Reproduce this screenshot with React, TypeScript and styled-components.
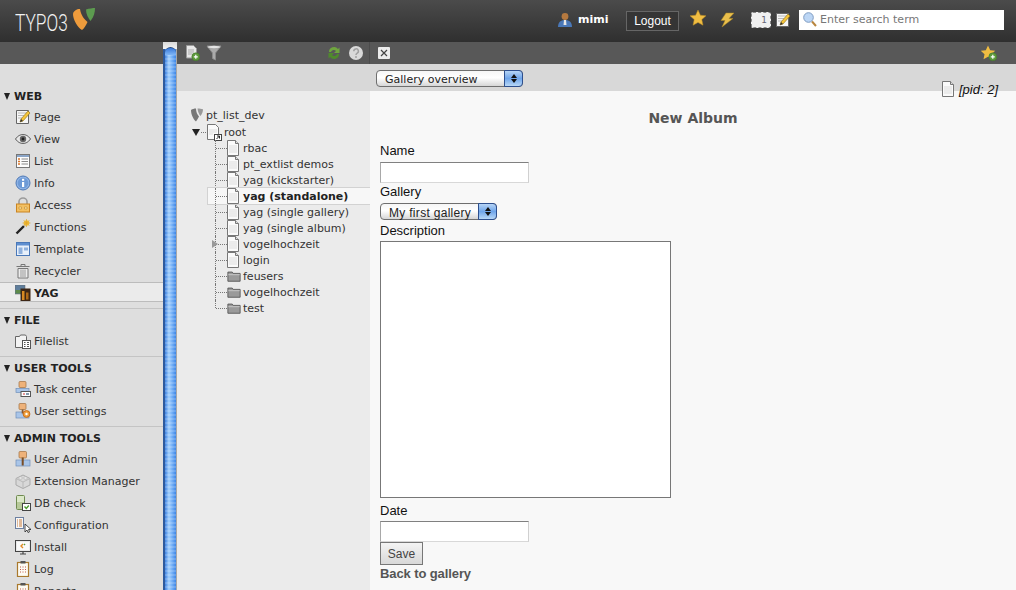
import React from 'react';
import styled, { createGlobalStyle } from 'styled-components';

const GlobalStyle = createGlobalStyle`
  html, body, #root { margin: 0; padding: 0; height: 100%; overflow: hidden; }
  body { font-family: "DejaVu Sans", Verdana, sans-serif; font-size: 11px; color: #333; }
`;

const Svg: React.FC<{ size?: number; children: React.ReactNode }> = ({ size = 16, children }) => (
  <svg width={size} height={size} viewBox="0 0 16 16" style={{ display: 'block', flex: 'none' }}>
    {children}
  </svg>
);

const DocIcon = () => (
  <svg width="12" height="16" viewBox="2 0 12 16" style={{ display: 'block', flex: 'none' }}>
    <path d="M2.5.5h8l3 3v12h-11z" fill="#fafafa" stroke="#777" />
    <path d="M10.5.5v3h3" fill="#ddd" stroke="#777" />
    <path d="M4 6h8M4 8h8M4 10h8M4 12h8" stroke="#ddd" />
  </svg>
);

const FolderIcon = () => (
  <svg width="14" height="14" viewBox="0 1 16 14" style={{ display: 'block', flex: 'none' }}>
    <path d="M1 3.5h5l1 1.500h8v9H1z" fill="#9a9a9a" stroke="#555" />
    <path d="M1.500 6.500h13" stroke="#ccc" />
  </svg>
);

const GreenPlus = () => (
  <>
    <circle cx="11.8" cy="11.8" r="4" fill="#5d9a3c" stroke="#3f6f28" strokeWidth=".5" />
    <path d="M9.800 11.800h4M11.800 9.800v4" stroke="#fff" strokeWidth="1.200" />
  </>
);

const icons: Record<string, React.ReactNode> = {
  page: (
    <Svg>
      <path d="M1.500 1.500h12v13h-12z" fill="#f6f6f6" stroke="#666" />
      <path d="M3 4h9M3 6.500h6M3 9h4" stroke="#b9b9b9" />
      <path d="M5 13l1-3 7-8 2 2-7 8z" fill="#f5c53a" stroke="#8a6a10" strokeWidth=".6" />
      <path d="M5 13l1-3 2 2z" fill="#333" />
    </Svg>
  ),
  view: (
    <Svg>
      <path d="M.5 8C3 4.500 5.500 3.600 8 3.600S13 4.500 15.500 8C13 11.500 10.500 12.400 8 12.400S3 11.500.5 8z" fill="#e8e8e8" stroke="#555" />
      <circle cx="8" cy="8" r="3.200" fill="#666" />
      <circle cx="8" cy="8" r="1.400" fill="#222" />
    </Svg>
  ),
  list: (
    <Svg>
      <rect x="1.500" y="1.500" width="13" height="13" fill="#fdfdfd" stroke="#777" />
      <path d="M2 2h12v2H2z" fill="#8aa5c8" />
      <path d="M3 6h2M3 8.500h2M3 11h2" stroke="#d9762a" strokeWidth="1.300" />
      <path d="M6.500 6H13M6.500 8.500H13M6.500 11H13" stroke="#8a8a8a" strokeWidth="1.200" />
    </Svg>
  ),
  info: (
    <Svg>
      <circle cx="8" cy="8" r="7" fill="#8fb4e6" stroke="#4f79b5" />
      <circle cx="8" cy="8" r="5.300" fill="#6d9ad6" />
      <rect x="7" y="7" width="2.200" height="5" fill="#fff" />
      <rect x="7" y="3.800" width="2.200" height="2" fill="#fff" />
    </Svg>
  ),
  access: (
    <Svg>
      <path d="M4 7V4.500a4 3.500 0 0 1 8 0V7" fill="none" stroke="#9b9b9b" strokeWidth="1.600" />
      <rect x="1.500" y="7" width="13" height="8" fill="#f3c063" stroke="#c98423" />
      <path d="M4 10h2.500v2H4zM9.500 10H12v2H9.500z" fill="#fbe7ad" stroke="#b77b1e" strokeWidth=".5" />
    </Svg>
  ),
  functions: (
    <Svg>
      <path d="M1.500 14.500L9 7" stroke="#222" strokeWidth="2.400" />
      <path d="M9 7l1.500-1.500" stroke="#bbb" strokeWidth="2.400" />
      <circle cx="11.500" cy="4" r="2.800" fill="#f0c23c" />
      <path d="M11.500 0v8M7.500 4h8M8.700 1.200l5.600 5.600M14.300 1.200L8.700 6.800" stroke="#e2a52a" strokeWidth=".7" />
    </Svg>
  ),
  template: (
    <Svg>
      <rect x="1.500" y="1.500" width="13" height="13" fill="#e8f0fa" stroke="#4a78b8" />
      <path d="M2 2h12v2.500H2z" fill="#5f8fd0" />
      <rect x="3.500" y="6.500" width="4" height="6.500" fill="#8fb1de" />
      <rect x="9" y="6.500" width="4" height="3" fill="#8fb1de" />
    </Svg>
  ),
  recycler: (
    <Svg>
      <path d="M1.500 3.500h13M6 3V1.500h4V3" fill="none" stroke="#777" />
      <path d="M3 5.500h10v9.500H3z" fill="#ececec" stroke="#777" />
      <path d="M6 6.500V14M8 6.500V14M10 6.500V14" stroke="#999" />
    </Svg>
  ),
  yag: (
    <Svg>
      <rect x="0" y="0" width="10" height="9" fill="#5f7e9c" stroke="#666" strokeWidth=".5" />
      <rect x="0.500" y="5" width="8" height="3.500" fill="#5d8a4a" />
      <rect x="5.500" y="3.500" width="10" height="12.500" fill="#3d2615" />
      <rect x="7" y="6" width="2.500" height="9" fill="#d88a22" />
      <rect x="11" y="7.500" width="2.500" height="7" fill="#b06a18" />
    </Svg>
  ),
  filelist: (
    <Svg>
      <path d="M.5 3.500h4l1-1.500h5l1 1.500v11H.5z" fill="#f3f3f3" stroke="#666" />
      <rect x="7.500" y="7.500" width="8" height="8" fill="#fff" stroke="#555" />
      <path d="M9 9.500h1.500M12 9.500h2M9 11.500h1.500M12 11.500h2M9 13.500h1.500M12 13.500h2" stroke="#555" />
    </Svg>
  ),
  task: (
    <Svg>
      <rect x="4" y="0.500" width="7" height="6" rx="1" fill="#eeb27a" stroke="#a0703f" strokeWidth=".7" />
      <rect x="1" y="7.500" width="13" height="4" fill="#a9c5e8" stroke="#6f8fb9" strokeWidth=".7" />
      <rect x="6" y="10.500" width="9.500" height="5" fill="#fff" stroke="#555" />
      <path d="M8 13h2" stroke="#c33" strokeWidth="1.200" />
      <path d="M11 13h3" stroke="#357" strokeWidth="1.200" />
    </Svg>
  ),
  settings: (
    <Svg>
      <rect x="4" y="0.500" width="7" height="6" rx="1" fill="#eeb27a" stroke="#a0703f" strokeWidth=".7" />
      <rect x="1" y="9" width="13" height="6" fill="#a9c5e8" stroke="#6f8fb9" strokeWidth=".7" />
      <rect x="6.700" y="6.500" width="1.800" height="4" fill="#8a5a2e" />
      <circle cx="11.500" cy="11" r="3.400" fill="#f0a03c" stroke="#c96d1a" />
      <circle cx="11.500" cy="11" r="1.200" fill="#fff" />
    </Svg>
  ),
  useradmin: (
    <Svg>
      <rect x="4" y="0.500" width="7.500" height="6.500" rx="1" fill="#eeb27a" stroke="#a0703f" strokeWidth=".7" />
      <rect x="1" y="9" width="14" height="6" fill="#a9c5e8" stroke="#6f8fb9" strokeWidth=".7" />
      <rect x="6.700" y="6.500" width="2" height="8" fill="#7a4e26" />
    </Svg>
  ),
  extension: (
    <Svg>
      <path d="M8 2l7 3.500v6.500L8 15.500 1 12V5.500z" fill="#d8d8d8" stroke="#a9a9a9" />
      <path d="M1 5.500l7 3.500 7-3.500M8 9v6.500" fill="none" stroke="#b8b8b8" />
      <ellipse cx="5.500" cy="5" rx="2" ry="1.200" fill="#f1f1f1" stroke="#aaa" strokeWidth=".6" />
      <ellipse cx="10.500" cy="5" rx="2" ry="1.200" fill="#f1f1f1" stroke="#aaa" strokeWidth=".6" />
    </Svg>
  ),
  db: (
    <Svg>
      <path d="M1.500 1.500q0-1 1-1h6q1 0 1 1v12q0 1-1 1h-6q-1 0-1-1z" fill="#dbe8c8" stroke="#6f8a50" />
      <path d="M2 7h7v7H2z" fill="#b7c99a" />
      <rect x="7.500" y="8.500" width="8" height="7" fill="#fff" stroke="#444" />
      <path d="M9.500 11.500l1.800 2 2.500-3" fill="none" stroke="#4a9a2c" strokeWidth="1.400" />
    </Svg>
  ),
  config: (
    <Svg>
      <rect x=".5" y=".5" width="8" height="11" fill="#f8f8f8" stroke="#6c7fa0" />
      <path d="M2 3h1M4 3h3M2 5h1M4 5h3M2 7h1M4 7h3M2 9h1M4 9h3" stroke="#c77a3a" />
      <path d="M10 7l0 8 2-2 1 2.500 1.500-.7-1-2.300h2.500z" fill="#fff" stroke="#222" strokeWidth=".8" />
    </Svg>
  ),
  install: (
    <Svg>
      <rect x=".5" y="1.500" width="15" height="11" fill="#e9e9e9" stroke="#444" />
      <rect x="2" y="3" width="12" height="8" fill="#fafafa" />
      <path d="M8 5l-2 2 2 2" fill="none" stroke="#e08a25" strokeWidth="1.400" />
      <path d="M9 5l1 1" stroke="#5a9a35" strokeWidth="1.400" />
      <path d="M5 15h6M8 13v2" stroke="#444" strokeWidth="1.200" />
    </Svg>
  ),
  log: (
    <Svg>
      <rect x="2.500" y="1.500" width="11" height="14" fill="#fdfbf3" stroke="#a9792d" strokeWidth="1.200" />
      <rect x="5.500" y="0" width="5" height="2.500" fill="#555" />
      <path d="M5 6h1M7.500 6h1M10 6h1M5 8.500h1M7.500 8.500h1M10 8.500h1M5 11h1M7.500 11h1M10 11h1" stroke="#c0584a" />
    </Svg>
  ),
};

const menuGroups = [
  {
    title: 'WEB',
    items: [
      ['Page', 'page'], ['View', 'view'], ['List', 'list'], ['Info', 'info'], ['Access', 'access'],
      ['Functions', 'functions'], ['Template', 'template'], ['Recycler', 'recycler'], ['YAG', 'yag'],
    ],
  },
  { title: 'FILE', items: [['Filelist', 'filelist']] },
  { title: 'USER TOOLS', items: [['Task center', 'task'], ['User settings', 'settings']] },
  {
    title: 'ADMIN TOOLS',
    items: [
      ['User Admin', 'useradmin'], ['Extension Manager', 'extension'], ['DB check', 'db'],
      ['Configuration', 'config'], ['Install', 'install'], ['Log', 'log'], ['Reports', 'log'],
    ],
  },
];

const treeRows: { label: string; folder?: boolean; active?: boolean; expandable?: boolean }[] = [
  { label: 'rbac' },
  { label: 'pt_extlist demos' },
  { label: 'yag (kickstarter)' },
  { label: 'yag (standalone)', active: true },
  { label: 'yag (single gallery)' },
  { label: 'yag (single album)' },
  { label: 'vogelhochzeit', expandable: true },
  { label: 'login' },
  { label: 'feusers', folder: true },
  { label: 'vogelhochzeit', folder: true },
  { label: 'test', folder: true },
];

const Page = styled.div`
  display: flex;
  flex-direction: column;
  height: 590px;
  overflow: hidden;
  background: #f8f8f8;
`;

const TopBar = styled.header`
  display: flex;
  align-items: center;
  height: 42px;
  flex: none;
  background: linear-gradient(#4b4b4b, #2f2f2f);
`;

const Logo = styled.div`
  display: flex;
  align-items: center;
  margin-left: 15px;
  width: 542px;
`;

const LogoText = styled.span`
  display: inline-block;
  width: 53px;
  margin-top: 3px;
  font-family: Roboto, sans-serif;
  font-weight: 300;
  font-size: 24px;
  line-height: 24px;
  color: #f2f2f2;
  transform: scaleX(0.72);
  transform-origin: left center;
  white-space: nowrap;
`;

const User = styled.div`
  display: flex;
  align-items: center;
  gap: 5px;
  width: 69px;
  margin-top: -3px;
`;

const UserName = styled.span`
  font-weight: 700;
  font-size: 11px;
  color: #fff;
`;

const Logout = styled.button`
  width: 53px;
  height: 20px;
  padding: 0;
  margin-right: 10px;
  border: 1px solid #666;
  background: #353535;
  color: #fff;
  font-family: "Liberation Sans", Arial, sans-serif;
  font-size: 12px;
`;

const DockIcon = styled.div<{ $w: number }>`
  width: ${(p) => p.$w}px;
  flex: none;
  margin-top: -3px;
`;

const Badge = styled.div`
  width: 20px;
  height: 16px;
  margin-right: 4px;
  margin-top: -3px;
  box-sizing: border-box;
  border: 1px dashed #888;
  border-radius: 2px;
  background: #f0f0f0;
  color: #667;
  font-size: 9px;
  line-height: 14px;
  text-align: right;
  padding-right: 3px;
`;

const Search = styled.div`
  display: flex;
  align-items: center;
  gap: 3px;
  width: 205px;
  height: 20px;
  margin-left: 9px;
  margin-top: -3px;
  padding-left: 4px;
  box-sizing: border-box;
  background: #fff;
  color: #777;
  font-size: 11px;
`;

const Main = styled.div`
  flex: 1;
  display: flex;
  min-height: 0;
`;

const Menu = styled.nav`
  width: 163px;
  flex: none;
  display: flex;
  flex-direction: column;
  background: #dedede;
`;

const ToolStrip = styled.div`
  display: flex;
  align-items: center;
  height: 22px;
  flex: none;
  background: #585858;
`;

const MenuScroll = styled.div`
  padding-top: 21px;
`;

const MenuGroup = styled.section`
  padding-bottom: 4px;
  border-bottom: 1px solid #c4c4c4;
`;

const MenuHeader = styled.div`
  display: flex;
  align-items: center;
  box-sizing: border-box;
  height: 21px;
  padding: 2px 0 0 4px;
  font-weight: 700;
  color: #222;
`;

const Caret = styled.span`
  width: 0;
  height: 0;
  margin-right: 4px;
  border-left: 3.5px solid transparent;
  border-right: 3.5px solid transparent;
  border-top: 7px solid #222;
`;

const MenuItem = styled.div<{ $active?: boolean }>`
  display: flex;
  align-items: center;
  gap: 3px;
  padding-left: 15px;
  height: ${(p) => (p.$active ? 20 : 22)}px;
  color: #333;
  ${(p) =>
    p.$active &&
    `
    box-sizing: border-box;
    padding-top: 2px;
    margin-bottom: 2px;
    background: #ebebeb;
    border-top: 1px solid #bcbcbc;
    border-bottom: 1px solid #bcbcbc;
    font-weight: 700;
    color: #222;
  `}
`;

const Splitter = styled.div`
  position: relative;
  width: 14px;
  flex: none;
  box-sizing: border-box;
  border-left: 2px solid #2e5a9c;
  border-right: 1px solid #a8a8a8;
  background:
    repeating-linear-gradient(rgba(255, 255, 255, 0.16) 0 2px, rgba(255, 255, 255, 0) 2px 4px),
    linear-gradient(90deg, #3a7fe0, #a2cffc 35%, #7ab4f8 60%, #3d86e6);

  &::before {
    content: '';
    position: absolute;
    left: -2px;
    right: -1px;
    top: 0;
    height: 7px;
    background: linear-gradient(#d8d8d8, #f4f4f4);
  }

  &::after {
    content: '';
    position: absolute;
    left: 0;
    right: 0;
    top: 5px;
    height: 7px;
    border-radius: 6px 6px 0 0;
    border-top: 1px solid #24477d;
    background: linear-gradient(#3878d8, #7fb6f7);
  }
`;

const TreePanel = styled.aside`
  width: 193px;
  flex: none;
  display: flex;
  flex-direction: column;
  background: #ebebeb;
`;

const TreeTools = styled(ToolStrip)`
  padding: 0 5px 0 7px;
  gap: 6px;
  border-right: 1px solid #4c4c4c;
`;

const ToolSpacer = styled.div`
  flex: 1;
`;

const GreyStrip = styled.div`
  height: 27px;
  flex: none;
  background: #d8d8d8;
`;

const Tree = styled.div`
  padding-top: 16px;
`;

const TreeRoot = styled.div`
  display: flex;
  align-items: center;
  gap: 2px;
  height: 16px;
  padding-left: 13px;
  color: #333;
`;

const RootRow = styled(TreeRoot)`
  box-sizing: border-box;
  height: 17px;
  padding: 1px 0 0 15px;
  gap: 0;
`;

const RootGuide = styled.span`
  width: 5px;
  border-top: 1px dotted #777;
`;

const RootText = styled.span`
  margin-left: 2px;
`;

const TreeCaret = styled.span`
  width: 0;
  height: 0;
  margin-right: 1px;
  border-left: 4px solid transparent;
  border-right: 4px solid transparent;
  border-top: 7px solid #222;
`;

const TreeRow = styled.div<{ $active?: boolean }>`
  display: flex;
  align-items: center;
  position: relative;
  height: 16px;
  margin-left: 30px;
  padding-left: 8px;
  color: ${(p) => (p.$active ? '#222' : '#333')};
  font-weight: ${(p) => (p.$active ? 700 : 400)};
  ${(p) =>
    p.$active &&
    `
    background: #f7f7f7;
    box-shadow: inset 1px 0 0 #d2d2d2, 0 -1px 0 #d2d2d2, 0 1px 0 #d2d2d2;
    z-index: 1;
  `}
`;

const Guide = styled.span<{ $last?: boolean }>`
  position: relative;
  width: 12px;
  height: 16px;
  flex: none;

  &::before {
    content: '';
    position: absolute;
    left: 0;
    top: 0;
    height: ${(p) => (p.$last ? 8 : 16)}px;
    border-left: 1px dotted #777;
  }

  &::after {
    content: '';
    position: absolute;
    left: 1px;
    right: 0;
    top: 8px;
    border-top: 1px dotted #777;
  }
`;

const Expander = styled.span`
  position: absolute;
  left: 5px;
  top: 4px;
  width: 0;
  height: 0;
  z-index: 1;
  border-top: 4px solid transparent;
  border-bottom: 4px solid transparent;
  border-left: 6px solid #999;
`;

const RowIcon = styled.span`
  flex: none;
  display: flex;
  width: 16px;
`;

const Content = styled.main`
  flex: 1;
  min-width: 0;
  position: relative;
  display: flex;
  flex-direction: column;
`;

const DocTools = styled(ToolStrip)`
  justify-content: space-between;
  padding: 0 19px 0 8px;
`;

const CloseBox = styled.div`
  width: 12px;
  height: 12px;
  display: flex;
  align-items: center;
  justify-content: center;
  background: #ececec;
  border-radius: 1px;
`;

const DocBar = styled(GreyStrip)`
  display: flex;
  align-items: center;
  padding: 1px 0 0 6px;
  box-sizing: border-box;
`;

const AquaSelect = styled.div<{ $w: number }>`
  position: relative;
  box-sizing: border-box;
  width: ${(p) => p.$w}px;
  height: 17px;
  padding-left: 8px;
  border: 1px solid #6f6f6f;
  border-radius: 4px;
  background: linear-gradient(#f6f6f6, #fff 45%, #d6d6d6);
  font-size: 11px;
  line-height: 18px;
  color: #222;
`;

const AquaArrows = styled.span`
  position: absolute;
  right: -1px;
  top: -1px;
  bottom: -1px;
  width: 17px;
  display: flex;
  flex-direction: column;
  align-items: center;
  justify-content: center;
  gap: 1px;
  border: 1px solid #2d4f8e;
  border-radius: 0 4px 4px 0;
  background: linear-gradient(#b7d5f6, #6fa5ea 50%, #b8d8f7);
`;

const ArrowUp = styled.i`
  width: 0;
  height: 0;
  border-left: 3px solid transparent;
  border-right: 3px solid transparent;
  border-bottom: 4px solid #111;
`;

const ArrowDown = styled(ArrowUp)`
  border-bottom: 0;
  border-top: 4px solid #111;
`;

const PidTag = styled.div`
  position: absolute;
  right: 18px;
  top: 39px;
  display: flex;
  align-items: center;
  gap: 5px;
  font-family: "Liberation Sans", Arial, sans-serif;
  font-style: italic;
  font-size: 13px;
  color: #111;
`;

const Body = styled.div`
  flex: 1;
  background: #f8f8f8;
  padding: 19px 10px 0;
  font-family: "Liberation Sans", Arial, sans-serif;
  font-size: 13px;
`;

const Title = styled.h2`
  margin: 0 0 16px;
  height: 17px;
  line-height: 17px;
  text-align: center;
  font-family: "DejaVu Sans", Verdana, sans-serif;
  font-size: 14px;
  font-weight: 700;
  color: #555;
`;

const Field = styled.label<{ $low?: boolean }>`
  display: block;
  height: 16px;
  line-height: ${(p) => (p.$low ? 18 : 16)}px;
  color: #111;
`;

const TextInput = styled.input`
  display: block;
  box-sizing: border-box;
  width: 149px;
  height: 21px;
  margin: 3px 0 0;
  padding: 0;
  border: 1px solid;
  border-color: #808080 #d0d0d0 #d8d8d8 #a8a8a8;
  background: #fff;
`;

const FormSelect = styled(AquaSelect)`
  margin: 3px 0 2px;
  font-size: 12px;
  letter-spacing: 0.3px;
`;

const TextArea = styled.textarea`
  display: block;
  box-sizing: border-box;
  width: 291px;
  height: 257px;
  margin: 3px 0 4px;
  padding: 0;
  resize: none;
  border: 1px solid #777;
  background: #fff;
`;

const SaveButton = styled.button`
  display: block;
  box-sizing: border-box;
  width: 43px;
  height: 23px;
  padding: 0;
  border: 1px solid #777;
  background: linear-gradient(#f4f4f4, #d8d8d8);
  color: #444;
  font-family: "Liberation Sans", Arial, sans-serif;
  font-size: 12px;
`;

const BackLink = styled.a`
  display: block;
  margin-top: 1px;
  line-height: 16px;
  font-weight: 700;
  letter-spacing: -0.1px;
  color: #555;
`;

const GapField = styled(Field)`
  padding-top: 1px;
`;

const App: React.FC = () => (
  <Page>
    <GlobalStyle />
    <TopBar>
      <Logo>
        <LogoText>TYPO3</LogoText>
        <svg width="24" height="24" viewBox="0 0 24 24" style={{ marginLeft: 5, marginTop: -4 }}>
          <path d="M5 2C2 3 0 5 0 7c0 5 4 13 9 16 2-1 4-5 5.500-8C11 12 8 8 7 2z" fill="#ee9b3c" />
          <path d="M13 2.500c3-1 7-1.500 9-1.500 0 4-1 9-4.500 13C15 11 13 7 13 2.500z" fill="#5c9b4f" />
        </svg>
      </Logo>
      <User>
        <Svg>
          <circle cx="8" cy="4.500" r="3.400" fill="#b5793f" />
          <path d="M1 15c0-4.500 2.500-7 7-7s7 2.500 7 7z" fill="#4a78b8" />
          <path d="M7 8h2l.5 5h-3z" fill="#e8e8e8" />
        </Svg>
        <UserName>mimi</UserName>
      </User>
      <Logout>Logout</Logout>
      <DockIcon $w={30}>
        <svg width="18" height="18" viewBox="0 0 18 18">
          <path d="M9 1l2.400 5.200 5.600.6-4.200 3.800 1.200 5.600L9 13.400 4 16.200l1.200-5.600L1 6.800l5.600-.6z" fill="#f0bd42" stroke="#b98a23" strokeWidth=".5" />
        </svg>
      </DockIcon>
      <DockIcon $w={32}>
        <Svg>
          <path d="M7 1h8L10 6.500h4L3 15l3-6.500H2z" fill="#e9bf4c" stroke="#a98522" strokeWidth=".5" />
        </Svg>
      </DockIcon>
      <Badge>1</Badge>
      <DockIcon $w={15}>{icons.page}</DockIcon>
      <Search>
        <svg width="14" height="15" viewBox="0 0 14 15">
          <circle cx="5.500" cy="5.500" r="4.800" fill="#bcd6f5" stroke="#7f9cc2" />
          <path d="M9 9.500l4 4.500" stroke="#b8863f" strokeWidth="2" />
        </svg>
        Enter search term
      </Search>
    </TopBar>
    <Main>
      <Menu>
        <ToolStrip />
        <MenuScroll>
          {menuGroups.map((group) => (
            <MenuGroup key={group.title}>
              <MenuHeader>
                <Caret />
                {group.title}
              </MenuHeader>
              {group.items.map(([label, icon]) => (
                <MenuItem key={label} $active={label === 'YAG'}>
                  {icons[icon]}
                  {label}
                </MenuItem>
              ))}
            </MenuGroup>
          ))}
        </MenuScroll>
      </Menu>
      <Splitter />
      <TreePanel>
        <TreeTools>
          <Svg>
            <path d="M2.500.5h7l3 3V13h-10z" fill="#e8e8e8" stroke="#999" />
            <path d="M4 5h6M4 7h6M4 9h4" stroke="#aaa" />
            <GreenPlus />
          </Svg>
          <Svg>
            <path d="M1 1h14L9.500 8v7l-3-1.500V8z" fill="#aaa" stroke="#8a8a8a" />
            <ellipse cx="8" cy="2" rx="6.500" ry="1.200" fill="#e4e4e4" />
          </Svg>
          <ToolSpacer />
          <Svg>
            <path d="M3 7a5 5 0 0 1 9-3l1.500-1.500V8H8l2-2a3 3 0 0 0-5 1z" fill="#6fa53f" />
            <path d="M13 9a5 5 0 0 1-9 3l-1.500 1.500V8H8l-2 2a3 3 0 0 0 5-1z" fill="#4f8a2c" />
          </Svg>
          <Svg>
            <circle cx="8" cy="8" r="7" fill="#d9d9d9" />
            <path d="M5.800 6.200a2.300 2.300 0 1 1 3.200 2.100c-.8.400-1 .800-1 1.700" fill="none" stroke="#a0a0a0" strokeWidth="1.500" />
            <circle cx="8" cy="12" r="1" fill="#a0a0a0" />
          </Svg>
        </TreeTools>
        <GreyStrip />
        <Tree>
          <TreeRoot>
            <svg width="14" height="16" viewBox="0 0 14 16">
              <path d="M1 3c1.500-1 3-1.500 5-1.500 0 3 1.200 6 3 8-1 2-2 3.500-3 5C3 12 1 7 1 3z" fill="#777" />
              <path d="M7.500 1.500c2 0 4 .2 5.500.8 0 2-.7 4.500-2.500 6.700-1.700-1.800-2.800-4.700-3-7.500z" fill="#999" />
            </svg>
            pt_list_dev
          </TreeRoot>
          <RootRow>
            <TreeCaret />
            <RootGuide />
            <svg width="16" height="17" viewBox="0 0 16 17">
              <path d="M1.500.5h8l3 3v12h-11z" fill="#fafafa" stroke="#777" />
              <path d="M3 6h8M3 8h8M3 10h4" stroke="#ddd" />
              <rect x="8.500" y="10.500" width="7" height="6" fill="#fff" stroke="#444" />
              <path d="M10.500 15l3-3M11 12h2.500v2.500" fill="none" stroke="#222" />
            </svg>
            <RootText>root</RootText>
          </RootRow>
          {treeRows.map((row, i) => (
            <TreeRow key={`${row.label}-${i}`} $active={row.active}>
              <Guide $last={i === treeRows.length - 1} />
              {row.expandable && <Expander />}
              <RowIcon>{row.folder ? <FolderIcon /> : <DocIcon />}</RowIcon>
              {row.label}
            </TreeRow>
          ))}
        </Tree>
      </TreePanel>
      <Content>
        <DocTools>
          <CloseBox>
            <svg width="8" height="8" viewBox="0 0 8 8">
              <path d="M1 1l6 6M7 1L1 7" stroke="#444" strokeWidth="1.200" />
            </svg>
          </CloseBox>
          <Svg>
            <path d="M7 .5l2.200 4.700 5 .6-3.700 3.400 1 5-4.500-2.500-4.500 2.500 1-5L-.2 5.800l5-.6z" fill="#f0bd42" />
            <GreenPlus />
          </Svg>
        </DocTools>
        <DocBar>
          <AquaSelect $w={147}>
            Gallery overview
            <AquaArrows>
              <ArrowUp />
              <ArrowDown />
            </AquaArrows>
          </AquaSelect>
        </DocBar>
        <PidTag>
          <DocIcon />
          [pid: 2]
        </PidTag>
        <Body>
          <Title>New Album</Title>
          <Field>Name</Field>
          <TextInput />
          <GapField>Gallery</GapField>
          <FormSelect $w={117}>
            My first gallery
            <AquaArrows>
              <ArrowUp />
              <ArrowDown />
            </AquaArrows>
          </FormSelect>
          <Field $low>Description</Field>
          <TextArea />
          <Field $low>Date</Field>
          <TextInput />
          <SaveButton>Save</SaveButton>
          <BackLink>Back to gallery</BackLink>
        </Body>
      </Content>
    </Main>
  </Page>
);

export default App;
